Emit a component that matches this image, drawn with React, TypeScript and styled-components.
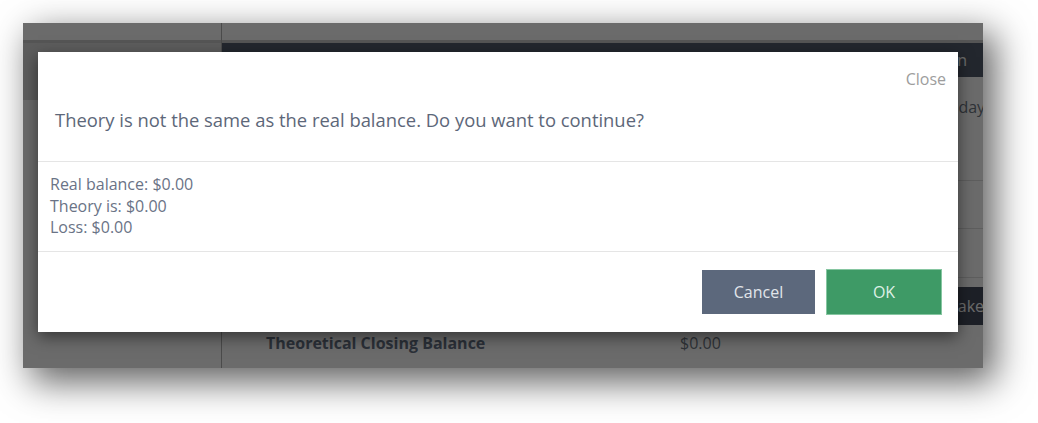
import React from "react";
import styled, { createGlobalStyle } from "styled-components";

const GlobalStyle = createGlobalStyle`
  html, body { margin: 0; padding: 0; background: #ffffff; }
  body { font-family: "Open Sans", "Noto Sans", sans-serif; }
  * { box-sizing: border-box; }
`;

const Page = styled.div`
  padding: 23px;
  min-height: 423px;
  background: #ffffff;
`;

const Frame = styled.div`
  position: relative;
  width: 960px;
  height: 345px;
  display: flex;
  overflow: hidden;
  background: #ffffff;
  box-shadow: 10px 12px 34px 2px rgba(0, 0, 0, 0.62);
`;

const Sidebar = styled.aside`
  width: 199px;
  flex: none;
  display: flex;
  flex-direction: column;
  border-right: 1px solid #b2b2b2;
`;

const TopStrip = styled.div`
  height: 20px;
  flex: none;
  border-bottom: 3px solid #cbcbcb;
`;

const SidebarHeader = styled.div`
  height: 57px;
  background: #dedede;
`;

const Main = styled.main`
  flex: 1;
  display: flex;
  flex-direction: column;
  min-width: 0;
  color: #707985;
  font-size: 16px;
`;

const MainHeader = styled.header`
  height: 34px;
  flex: none;
  display: flex;
  align-items: center;
  justify-content: flex-end;
  padding-right: 16px;
  background: #545e6f;
  color: #ffffff;
  font-size: 16px;
  white-space: nowrap;
`;

const GridRow = styled.div<{ $h?: number; $line?: boolean; $pt?: number }>`
  display: grid;
  grid-template-columns: 414px 260px 1fr;
  padding-left: 44px;
  padding-top: ${(p) => p.$pt ?? 0}px;
  ${(p) => (p.$h ? `height: ${p.$h}px;` : "")}
  flex: none;
  align-items: start;
  border-top: ${(p) => (p.$line ? "1px solid #e0e0e0" : "none")};
  white-space: nowrap;
  line-height: 22px;
`;

const Cell = styled.div<{ $col: number; $bold?: boolean }>`
  grid-column: ${(p) => p.$col};
  font-weight: ${(p) => (p.$bold ? 700 : 400)};
  color: ${(p) => (p.$bold ? "#667285" : "#707985")};
`;

const DarkButton = styled.button`
  grid-column: 3;
  height: 38px;
  padding: 0 9px;
  border: none;
  background: #464d5e;
  color: #ffffff;
  font-family: inherit;
  font-size: 16px;
  text-align: left;
  width: 90px;
`;

const Backdrop = styled.div`
  position: absolute;
  inset: 0;
  background: rgba(0, 0, 0, 0.58);
  display: flex;
  align-items: flex-start;
  padding: 29px 0 0 15px;
`;

const Modal = styled.div`
  width: 920px;
  height: 280px;
  background: #ffffff;
  display: flex;
  flex-direction: column;
  box-shadow: 0 5px 15px rgba(0, 0, 0, 0.5);
`;

const ModalHeader = styled.div`
  display: flex;
  flex-direction: column;
  padding: 16px 12px 28px 17px;
  border-bottom: 1px solid #e5e5e5;
`;

const CloseButton = styled.button`
  align-self: flex-end;
  border: none;
  background: none;
  padding: 0;
  font-family: inherit;
  font-size: 16px;
  line-height: 22px;
  color: #9d9d9d;
`;

const Title = styled.h4`
  margin: 17px 0 0;
  font-size: 18.4px;
  line-height: 26px;
  font-weight: 400;
  color: #5d6779;
`;

const ModalBody = styled.div`
  padding: 12px;
  font-size: 16px;
  line-height: 21.5px;
  color: #6a7386;
  border-bottom: 1px solid #e5e5e5;
`;

const ModalFooter = styled.div`
  flex: 1;
  display: flex;
  align-items: center;
  justify-content: flex-end;
  gap: 11px;
  padding: 0 16px;
`;

const ActionButton = styled.button<{ $variant: "cancel" | "ok" }>`
  font-family: inherit;
  font-size: 16px;
  width: ${(p) => (p.$variant === "ok" ? 116 : 113)}px;
  height: ${(p) => (p.$variant === "ok" ? 46 : 44)}px;
  border: ${(p) => (p.$variant === "ok" ? "1px solid #86c6a1" : "none")};
  background: ${(p) => (p.$variant === "ok" ? "#3e9a66" : "#5c687c")};
  color: ${(p) => (p.$variant === "ok" ? "#dff0e6" : "#e1e5ea")};
  padding: 0;
`;

export default function App() {
  return (
    <>
      <GlobalStyle />
      <Page>
        <Frame>
          <Sidebar>
            <TopStrip />
            <SidebarHeader />
          </Sidebar>
          <Main>
            <TopStrip />
            <MainHeader>Close session</MainHeader>
            <GridRow $h={103} $pt={19}>
              <Cell $col={3}>Today</Cell>
            </GridRow>
            <GridRow $h={48} $line />
            <GridRow $h={49} $line />
            <GridRow $line $pt={9}>
              <DarkButton>Take</DarkButton>
            </GridRow>
            <GridRow $pt={7}>
              <Cell $col={1} $bold>
                Theoretical Closing Balance
              </Cell>
              <Cell $col={2}>$0.00</Cell>
            </GridRow>
          </Main>
          <Backdrop>
            <Modal>
              <ModalHeader>
                <CloseButton>Close</CloseButton>
                <Title>Theory is not the same as the real balance. Do you want to continue?</Title>
              </ModalHeader>
              <ModalBody>
                <div>Real balance: $0.00</div>
                <div>Theory is: $0.00</div>
                <div>Loss: $0.00</div>
              </ModalBody>
              <ModalFooter>
                <ActionButton $variant="cancel">Cancel</ActionButton>
                <ActionButton $variant="ok">OK</ActionButton>
              </ModalFooter>
            </Modal>
          </Backdrop>
        </Frame>
      </Page>
    </>
  );
}
